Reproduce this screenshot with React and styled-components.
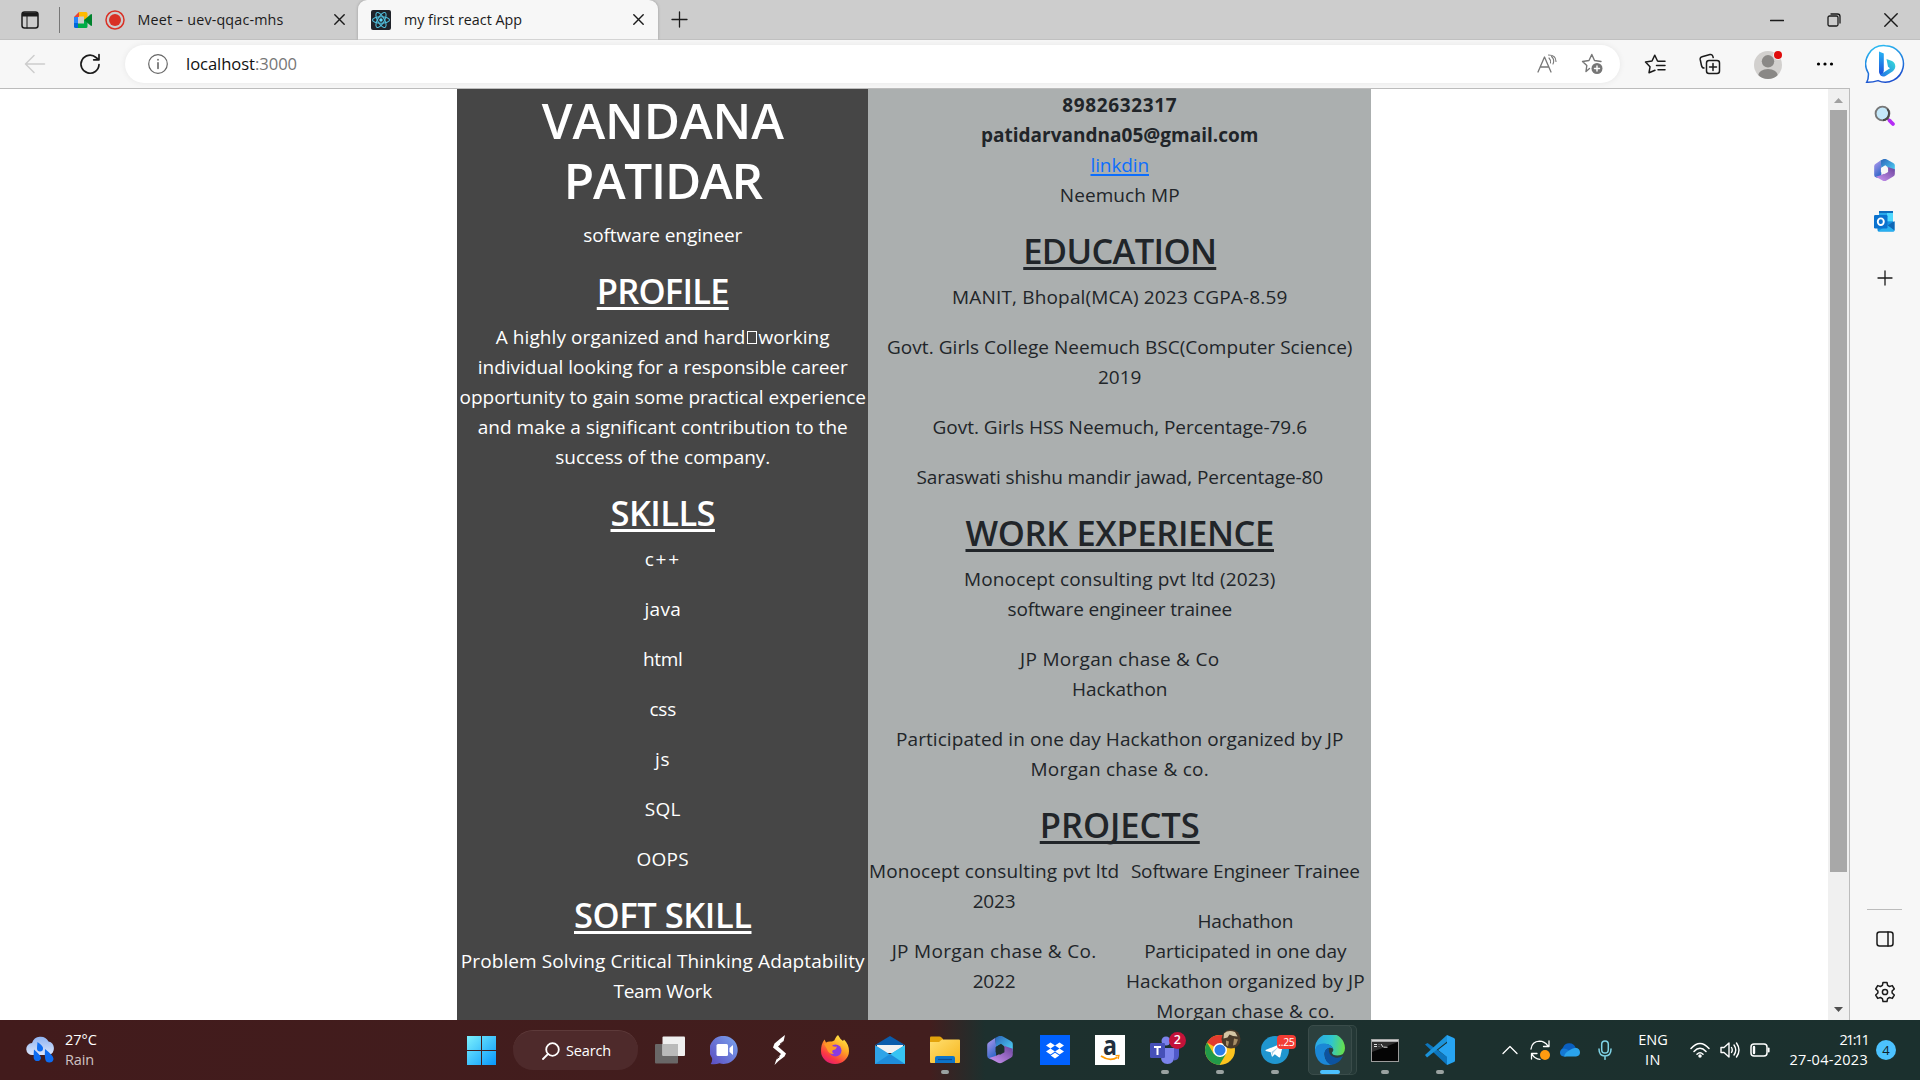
import React, { useLayoutEffect, useRef, useState } from "react";
import styled, { createGlobalStyle, css } from "styled-components";

const Global = createGlobalStyle`
  * { box-sizing: border-box; }
  body { margin: 0; overflow: hidden; background: #fff; }
  body, button { font-family: "Open Sans", "Noto Sans", sans-serif; }
`;

const Desktop = styled.div`
  width: 1920px;
  height: 1080px;
  display: flex;
  flex-direction: column;
  overflow: hidden;
`;

/* ---------- text fitted to a measured width ---------- */
const FitSpan = styled.span`
  white-space: nowrap;
`;

function Fit({ w, children }) {
  const ref = useRef(null);
  const [spacing, setSpacing] = useState(0);
  useLayoutEffect(() => {
    const el = ref.current;
    const natural = el.getBoundingClientRect().width;
    setSpacing((w - natural) / el.textContent.length);
  }, [w]);
  return (
    <FitSpan ref={ref} style={{ letterSpacing: `${spacing}px` }}>
      {children}
    </FitSpan>
  );
}

/* ---------- tab strip ---------- */
const TabStrip = styled.header`
  height: 40px;
  flex: none;
  display: flex;
  align-items: center;
  background: #cdcdcd;
  border-bottom: 1px solid #c0c0c0;
`;
const TabActions = styled.div`
  width: 60px;
  height: 26px;
  display: flex;
  align-items: center;
  padding-left: 21px;
  border-right: 1px solid #777;
`;
const Tab = styled.div`
  height: 40px;
  width: ${(p) => p.$width}px;
  padding: ${(p) => p.$pad};
  display: flex;
  align-items: center;
  font-size: 14.3px;
  line-height: 20px;
  color: #1b1b1b;
  ${(p) =>
    p.$active &&
    css`
      background: #f7f7f7;
      border-radius: 9px 9px 0 0;
      box-shadow: 0 0 3px rgba(0, 0, 0, 0.25);
      clip-path: inset(0 -4px 0 -4px);
    `}
`;
const TabTitle = styled.div`
  flex: 1;
  display: flex;
  align-items: center;
  gap: 12.5px;
  margin-left: 13px;
`;
const WindowControls = styled.div`
  margin-left: auto;
  display: flex;
  align-items: center;
  gap: 43px;
  padding-right: 22px;
`;
const NewTab = styled.div`
  display: flex;
  padding-left: 13px;
`;

/* ---------- toolbar ---------- */
const Toolbar = styled.div`
  height: 48px;
  flex: none;
  display: flex;
  align-items: center;
  background: #f7f7f7;
`;
const NavButtons = styled.div`
  width: 125px;
  flex: none;
  padding-left: 24px;
  display: flex;
  gap: 33px;
`;
const AddressBar = styled.div`
  width: 1495px;
  flex: none;
  height: 38px;
  border-radius: 19px;
  background: #fff;
  box-shadow: 0 0 6px rgba(0, 0, 0, 0.07);
  display: flex;
  align-items: center;
  padding: 0 17px 0 22px;
  gap: 24px;
`;
const Url = styled.div`
  flex: 1;
  margin-left: -7px;
  font-size: 16.6px;
  line-height: 24px;
  color: #111;
`;
const Port = styled.span`
  color: #767676;
`;
const ToolbarIcons = styled.div`
  flex: 1;
  display: flex;
  align-items: center;
  padding: 0 0 0 24px;
  gap: 32.5px;
`;
const Overflow = styled.svg`
  margin-left: -1px;
`;
const BingSlot = styled.div`
  display: flex;
  margin-left: -1.5px;
`;

/* ---------- page area ---------- */
const Body = styled.div`
  flex: 1;
  min-height: 0;
  display: flex;
`;
const Viewport = styled.main`
  width: 1850px;
  display: flex;
  border-top: 1px solid #bcbcbc;
  border-right: 1px solid #bcbcbc;
  background: #fff;
`;
const PageArea = styled.div`
  flex: 1;
  display: flex;
  justify-content: center;
  overflow: hidden;
`;
const Scrollbar = styled.div`
  width: 21px;
  background: #f0f0f0;
  display: flex;
  flex-direction: column;
  align-items: center;
  padding: 9px 0 8px;
`;
const Thumb = styled.div`
  width: 17px;
  height: 762px;
  margin: 7px 0 auto;
  background: #a8a8a8;
`;
const SideBar = styled.aside`
  flex: 1;
  background: #f7f7f7;
  display: flex;
  flex-direction: column;
  align-items: center;
  padding: 16px 1px 0 0;
`;
const SideSlot = styled.div`
  height: ${(p) => p.$h}px;
  display: flex;
  align-items: center;
`;
const SideRule = styled.div`
  width: 35px;
  height: 1px;
  background: #bcbcbc;
  margin: auto 0 4px;
`;

/* ---------- resume ---------- */
const Column = styled.section`
  width: ${(p) => p.$width}px;
  flex: none;
  padding: 1px 0 0 0.5px;
  background: ${(p) => p.$bg};
  color: ${(p) => p.$color};
  font-size: 19px;
  line-height: 30px;
  text-align: center;
`;
const Name = styled.h1`
  margin: 0 0 10px;
  font-size: 49.5px;
  line-height: 60px;
  font-weight: 600;
`;
const Heading = styled.h3`
  margin: 0 0 10px;
  font-size: 34.5px;
  line-height: 42px;
  font-weight: 600;
  text-decoration: underline;
  text-decoration-thickness: 3px;
  text-underline-offset: 3px;
  text-decoration-skip-ink: none;
`;
const Para = styled.div`
  margin-bottom: 20px;
`;
const Strong = styled.strong`
  font-weight: 700;
`;
const Link = styled.a`
  color: #0d6efd;
  text-decoration: underline;
  text-decoration-skip-ink: none;
  text-decoration-thickness: 2px;
  text-underline-offset: 2px;
`;
const Halves = styled.div`
  display: grid;
  grid-template-columns: 1fr 1fr;
`;
const MissingGlyph = styled.span`
  display: inline-block;
  width: 10px;
  height: 13px;
  margin: 0 2px 0 1px;
  border: 1px solid #fff;
`;

/* ---------- taskbar ---------- */
const TaskBar = styled.footer`
  height: 60px;
  flex: none;
  display: flex;
  align-items: center;
  background: linear-gradient(90deg, #421b1c 0, #421e1e 930px, #1d302e 985px, #1b302e 100%);
  color: #fff;
  font-size: 14.5px;
  line-height: 20px;
`;
const Weather = styled.div`
  width: 454px;
  display: flex;
  align-items: center;
  gap: 9px;
  padding: 0 0 0 26px;
`;
const Muted = styled.div`
  color: #cfc2c2;
`;
const StartSlot = styled.div`
  width: 59px;
  display: flex;
  padding-left: 13px;
`;
const SearchPill = styled.div`
  width: 125px;
  height: 40px;
  border-radius: 20px;
  background: #4e2a2b;
  border-top: 1px solid #5d3a3a;
  display: flex;
  align-items: center;
  gap: 6px;
  padding-left: 29px;
`;
const Apps = styled.div`
  display: flex;
  margin-left: 4.4px;
`;
const AppSlot = styled.div`
  width: 55px;
  height: 60px;
  display: flex;
  flex-direction: column;
  align-items: center;
  padding-top: 12px;
`;
const AppFace = styled.div`
  width: 36px;
  height: 36px;
  flex: none;
  position: relative;
  display: flex;
  align-items: center;
  justify-content: center;
`;
const ActiveSlot = styled(AppSlot)`
  width: 44px;
  height: 50px;
  margin: 5px 5.3px 5px 5.7px;
  padding-top: 6px;
  border-radius: 5px;
  background: #2c403e;
  border: 1px solid #3a4c4a;
  box-shadow: 5px 0 0 -1px #243836, 5px 0 0 0 #364946;
`;
const Indicator = styled.div`
  width: ${(p) => (p.$active ? 20 : 8)}px;
  height: 4px;
  margin-top: 2px;
  border-radius: 2px;
  background: ${(p) => (p.$active ? "#4cc2ff" : "#9aa2a1")};
`;
const CountBadge = styled.div`
  position: absolute;
  top: ${(p) => (p.$square ? 3 : 0)}px;
  right: -3px;
  width: ${(p) => (p.$square ? 19 : 17)}px;
  height: ${(p) => (p.$square ? 14 : 17)}px;
  border-radius: ${(p) => (p.$square ? 4 : 9)}px;
  background: ${(p) => (p.$square ? "#f23c34" : "#c4123a")};
  font-size: ${(p) => (p.$square ? 10.5 : 12.5)}px;
  font-weight: ${(p) => (p.$square ? 400 : 600)};
  letter-spacing: ${(p) => (p.$square ? -0.3 : 0)}px;
  line-height: ${(p) => (p.$square ? 14 : 16)}px;
  white-space: nowrap;
  text-align: center;
`;
const Tray = styled.div`
  margin-left: auto;
  padding-right: 24px;
  display: flex;
  align-items: center;
`;
const TrayIcon = styled.div`
  display: flex;
  margin-left: ${(p) => p.$gap}px;
`;
const TwoLines = styled.div`
  width: ${(p) => p.$width}px;
  margin-left: ${(p) => p.$gap}px;
  text-align: ${(p) => p.$align};
`;
const NoticeBadge = styled.div`
  width: 20px;
  height: 20px;
  margin-left: 8px;
  border-radius: 50%;
  background: #4cc2ff;
  color: #10242c;
  font-size: 13px;
  text-align: center;
`;

/* ---------- line icons ---------- */
const Icon = ({ w = 20, h = w, box = `0 0 ${w} ${h}`, c = "#1b1b1b", s = 1.3, children }) => (
  <svg width={w} height={h} viewBox={box} fill="none" stroke={c} strokeWidth={s} strokeLinecap="round" strokeLinejoin="round">
    {children}
  </svg>
);
const Close = ({ size = 11 }) => (
  <Icon w={size} s={1.4}>
    <path d={`M.8.8L${size - 0.8} ${size - 0.8}M${size - 0.8}.8L.8 ${size - 0.8}`} />
  </Icon>
);
const Plus = ({ size = 17 }) => (
  <Icon w={size}>
    <path d={`M${size / 2} 1V${size - 1}M1 ${size / 2}H${size - 1}`} />
  </Icon>
);

const MeetLogo = () => (
  <svg width="18" height="16" viewBox="0 0 18 16">
    <path d="M0 5L5 0v5z" fill="#ea4335" />
    <path d="M0 5h4v6H0z" fill="#2684fc" />
    <path d="M0 11h4v5H1.500Q0 16 0 14.500z" fill="#0066da" />
    <path d="M5 0h7q1.500 0 1.500 1.500V7l-3.500 2V4.500H5z" fill="#ffba00" />
    <path d="M4 11.500h6V8l3.500-1v7.500q0 1.500-1.500 1.500H4z" fill="#00ac47" />
    <path d="M10 8l6.500-5.500q1.500-1 1.500.500v10q0 1.500-1.500.500z" fill="#00832d" />
  </svg>
);
const RecordDot = () => (
  <svg width="20" height="20" viewBox="0 0 20 20">
    <circle cx="10" cy="10" r="9" fill="none" stroke="#d93025" strokeWidth="1.500" />
    <circle cx="10" cy="10" r="6" fill="#d93025" />
  </svg>
);
const ReactLogo = () => (
  <svg width="20" height="20" viewBox="0 0 20 20">
    <rect width="20" height="20" rx="2" fill="#20232a" />
    <g fill="none" stroke="#50bfdd" strokeWidth="1.100">
      <ellipse cx="10" cy="10" rx="8.500" ry="3.300" />
      <ellipse cx="10" cy="10" rx="8.500" ry="3.300" transform="rotate(60 10 10)" />
      <ellipse cx="10" cy="10" rx="8.500" ry="3.300" transform="rotate(120 10 10)" />
    </g>
    <circle cx="10" cy="10" r="1.700" fill="#61dafb" />
  </svg>
);
const BingLogo = () => (
  <svg width="40" height="40" viewBox="0 0 40 40">
    <defs>
      <linearGradient id="bingRing" x1="0" y1="0" x2="0.3" y2="1">
        <stop offset="0" stopColor="#2cc4f4" />
        <stop offset="1" stopColor="#1b50cf" />
      </linearGradient>
      <linearGradient id="bingB" x1="0" y1="0" x2="0" y2="1">
        <stop offset="0" stopColor="#27b4f5" />
        <stop offset="1" stopColor="#1b48d8" />
      </linearGradient>
      <linearGradient id="bingTail" x1="0" y1="1" x2="1" y2="0">
        <stop offset="0" stopColor="#2070e8" />
        <stop offset="1" stopColor="#38e0d8" />
      </linearGradient>
    </defs>
    <path d="M20.500 1.700a18.200 18.200 0 1 1-7.500 34.900c-3 1-7 1.900-11.300 1.700 1.500-2.500 1.900-5 1.700-9A18.200 18.200 0 0 1 20.500 1.700z" fill="#fff" stroke="url(#bingRing)" strokeWidth="1.500" />
    <path d="M14 7.500l4.800 2v17l-1.300 5.800q-3.500-1.500-3.500-5z" fill="url(#bingB)" />
    <path d="M21.500 15l5.500 2q3.300 1.800 3.300 5.500c0 2.500-1.800 4.500-4 5.700L20.500 32q-3.500 1.500-5.500-1.200l10-6.500-2-1.500z" fill="url(#bingTail)" />
  </svg>
);
const M365 = ({ size }) => (
  <svg width={size} height={size * 1.06} viewBox="0 0 26 28">
    <defs>
      <linearGradient id="mTop" x1="0" y1="0" x2="1" y2="1">
        <stop offset="0" stopColor="#2b62b8" />
        <stop offset="1" stopColor="#4fd6f8" />
      </linearGradient>
      <linearGradient id="mLeft" x1="0" y1="0" x2="0.4" y2="1">
        <stop offset="0" stopColor="#b69af0" />
        <stop offset="1" stopColor="#3268c8" />
      </linearGradient>
      <linearGradient id="mBottom" x1="0" y1="1" x2="1" y2="0">
        <stop offset="0" stopColor="#cf9af5" />
        <stop offset="1" stopColor="#6a419b" />
      </linearGradient>
    </defs>
    <path d="M8 2l-6 4Q0 7 0 9v11q0 2 2 3l2 1 5-3V9z" fill="url(#mLeft)" />
    <path d="M8 2l4-2q2-.500 4 .500L24 5q2 1 2 3v8l-8-5-4-3-5 3z" fill="url(#mTop)" />
    <path d="M26 13v6q0 2-2 3l-9 5.300q-2 1-4 0l-9-5 7-2.300 8-4V10z" fill="url(#mBottom)" />
    <path d="M13 9l4.500 2.500v5L13 19l-4.500-2.500v-5z" fill={size > 23 ? "#1d302e" : "#f7f7f7"} />
  </svg>
);
const Outlook = () => (
  <svg width="21" height="21" viewBox="0 0 21 21">
    <path d="M5 0h14v11H5z" fill="#28a8ea" />
    <path d="M5 0h14v2H5z" fill="#0f6cbd" />
    <path d="M13 2h6v8h-6z" fill="#50d9ff" />
    <path d="M3 11h17.500v8q0 1.500-1.500 1.500H5Q3.500 20.500 3.500 19z" fill="#1490df" />
    <path d="M20.500 10l-7 4.500 7 5z" fill="#1066b5" />
    <path d="M4 20.500h15q1.500 0 1.500-1L13 14z" fill="#28b0f0" />
    <rect y="4" width="13.500" height="13.500" rx="1.200" fill="#0a72cf" />
    <ellipse cx="6.800" cy="10.700" rx="3" ry="3.300" fill="none" stroke="#fff" strokeWidth="1.900" />
  </svg>
);
const SideSearch = () => (
  <svg width="22" height="22" viewBox="0 0 22 22">
    <path d="M13.500 13.500l2 2" stroke="#555" strokeWidth="2" />
    <path d="M15.500 15.500l3.500 3.500" stroke="#b52cf5" strokeWidth="3.800" strokeLinecap="round" />
    <circle cx="8.500" cy="8.500" r="6.900" fill="#c4e8fa" stroke="#777" strokeWidth="1.900" />
    <path d="M13.300 4A6.900 6.900 0 0 1 9 15.300" fill="none" stroke="#4b4b4b" strokeWidth="1.900" />
  </svg>
);
const Profile = () => (
  <svg width="31" height="30" viewBox="0 0 31 30">
    <clipPath id="pc"><circle cx="15" cy="16" r="14" /></clipPath>
    <circle cx="15" cy="16" r="14" fill="#d2d0ce" />
    <g clipPath="url(#pc)" fill="#8a8886">
      <circle cx="15" cy="12.300" r="6.200" />
      <ellipse cx="15" cy="27" rx="10" ry="7" />
    </g>
    <circle cx="25" cy="6" r="4.800" fill="#f7f7f7" />
    <circle cx="25" cy="6" r="4" fill="#e00b0b" />
  </svg>
);
const Gear = () => (
  <Icon w={22} s={1.5}>
    <path d="M9 1.500h4l.600 2.900 1.900 1.100 2.800-.900 2 3.400-2.200 2v2l2.200 2-2 3.400-2.800-.900-1.900 1.100-.600 2.900H9l-.600-2.900-1.900-1.100-2.800.900-2-3.400 2.200-2v-2l-2.200-2 2-3.400 2.800.900 1.900-1.100z" />
    <circle cx="11" cy="11" r="2.600" />
  </Icon>
);

/* ---------- taskbar drawings ---------- */
const WeatherIcon = () => (
  <svg width="30" height="28" viewBox="0 0 30 28">
    <defs>
      <linearGradient id="cl" x1="0" y1="0" x2="0" y2="1">
        <stop offset="0" stopColor="#8fb3f2" />
        <stop offset="1" stopColor="#dbe5fb" />
      </linearGradient>
    </defs>
    <path d="M6.500 19a6 6 0 0 1-.500-12A9 9 0 0 1 22.500 5.500 7 7 0 0 1 23 19z" fill="url(#cl)" />
    <g fill="#0d6cf2">
      <path d="M11.500 6q6 4 5.500 6.500a3 3 0 0 1-6 0q0-2 .500-6.500z" />
      <path d="M8 13.500q7 6 7 8.500a3.700 3.700 0 0 1-7.300 0q-.300-3 .300-8.500z" />
      <path d="M19 13q9 7 8.500 10a4.200 4.200 0 0 1-8.300 0q-.700-4-.200-10z" />
    </g>
  </svg>
);
const WindowsLogo = () => (
  <svg width="29" height="29" viewBox="0 0 29 29">
    <defs>
      <linearGradient id="win" x1="0" y1="0" x2="1" y2="1">
        <stop offset="0" stopColor="#7cf1fd" />
        <stop offset="1" stopColor="#0797fb" />
      </linearGradient>
    </defs>
    <path d="M0 0h14v14H0zM15 0h14v14H15zM0 15h14v14H0zM15 15h14v14H15z" fill="url(#win)" />
  </svg>
);
const TaskView = () => (
  <svg width="30" height="28" viewBox="0 0 30 28">
    <rect x="0" y="8" width="23" height="19.500" rx="1" fill="#696767" />
    <rect x="7.500" y="0.500" width="22.500" height="19.500" rx="1" fill="#efefef" />
    <path d="M7.500 8H23v12H8.500q-1 0-1-1z" fill="#b9b9b9" />
  </svg>
);
const Chat = () => (
  <svg width="30" height="29" viewBox="0 0 30 29">
    <defs>
      <linearGradient id="ch" x1="1" y1="0" x2="0" y2="0.8">
        <stop offset="0" stopColor="#7ba6ee" />
        <stop offset="1" stopColor="#5d52c4" />
      </linearGradient>
    </defs>
    <path d="M15 0a14 14 0 1 1-5.500 27.300Q5 29 .700 28q2-3 1.300-6A14 14 0 0 1 15 0z" fill="url(#ch)" />
    <rect x="6.500" y="8" width="11.500" height="12" rx="1.500" fill="#fff" />
    <path d="M19.500 12l3.500-3v10l-3.500-3z" fill="#fff" />
  </svg>
);
const Spark = () => (
  <svg width="13" height="30" viewBox="0 0 13 30">
    <path d="M12 0L10.500 6.500 5 11.500 13 18.500 11.500 21.500 5.500 26 1.500 30 3.500 24 8 19 0 12.500 1.500 8.500 7.500 3.500z" fill="#fff" />
    <path d="M10.500 6.500L7 9.200M3.500 24l3-2.300" stroke="#421e1e" strokeWidth="1" />
  </svg>
);
const Firefox = () => (
  <svg width="30" height="30" viewBox="0 0 30 30">
    <defs>
      <linearGradient id="ff" x1="0.8" y1="0" x2="0.2" y2="1">
        <stop offset="0" stopColor="#fff04a" />
        <stop offset="0.4" stopColor="#ffa324" />
        <stop offset="0.75" stopColor="#fb3b42" />
        <stop offset="1" stopColor="#e0167a" />
      </linearGradient>
    </defs>
    <path d="M18 0q2 4 5 6l1-1.500q5 5 5 11.500a14 13 0 0 1-28 0Q1 9 4.500 4.500L6 7.500Q8 6 12 6.500q3-1 3-2.500 1-2.500 3-4z" fill="url(#ff)" />
    <circle cx="15.500" cy="15.500" r="6" fill="#8a3be0" />
    <path d="M4 9q5-3 9 0l-1 2q3 1 5 .500-1 3.500-4 3.500-2 2 1 4-6 0-7-5z" fill="#ff9a26" />
  </svg>
);
const Mail = () => (
  <svg width="30" height="28" viewBox="0 0 30 28">
    <path d="M0 9L15 0l15 9z" fill="#0a5cab" />
    <path d="M2 9h26v8H2z" fill="#f1f1f1" />
    <path d="M0 9l15 9.500L30 9v19H0z" fill="#2fa4e8" />
    <path d="M30 9L14 19l16 9z" fill="#37c4f3" />
    <path d="M0 28l15-10 15 10z" fill="#1f8ddb" />
  </svg>
);
const Folder = () => (
  <svg width="30" height="28" viewBox="0 0 30 28">
    <defs>
      <linearGradient id="fo" x1="0" y1="0" x2="1" y2="1">
        <stop offset="0" stopColor="#ffdf70" />
        <stop offset="1" stopColor="#f6b51c" />
      </linearGradient>
    </defs>
    <path d="M0 1.500Q0 .500 1 .500h8.500q1 0 2 1L13 3v4H0z" fill="#e3a30c" />
    <path d="M0 6h9l3-2.500h17q1 0 1 1V26q0 1-1 1H1q-1 0-1-1z" fill="url(#fo)" />
    <path d="M5 27v-5q0-2 2-2h16q2 0 2 2v5z" fill="#0d74c9" />
    <path d="M8 23.500h14" stroke="#0a4d94" strokeWidth="1.200" />
  </svg>
);
const Dropbox = () => (
  <svg width="30" height="30" viewBox="0 0 30 30">
    <path d="M0 0h30v30H0z" fill="#0061fe" />
    <path d="M10.500 7.500l4.500 3-4.500 3-4.500-3zM19.500 7.500l4.500 3-4.500 3-4.500-3zM10.500 13.500l4.500 3-4.500 3-4.500-3zM19.500 13.500l4.500 3-4.500 3-4.500-3zM15 17.800l4.300 2.800L15 23.400l-4.300-2.800z" fill="#fff" />
  </svg>
);
const AmazonSvg = styled.svg`
  overflow: visible;
`;
const Amazon = () => (
  <AmazonSvg width="30" height="30" viewBox="0 0 30 30">
    <path d="M0 0h30v30H0z" fill="#fff" />
    <text x="15" y="19.500" textAnchor="middle" fontFamily="Open Sans, sans-serif" fontWeight="700" fontSize="27" fill="#222f3e" textLength="14" lengthAdjust="spacingAndGlyphs">a</text>
    <path d="M6 21q9 6 16.500 1.200" fill="none" stroke="#f90" strokeWidth="1.700" />
    <path d="M20.500 20.700l3.500-.200-.800 3.500" fill="none" stroke="#f90" strokeWidth="1.200" />
  </AmazonSvg>
);
const Teams = () => (
  <svg width="30" height="28" viewBox="0 0 30 28">
    <circle cx="16" cy="5" r="4.500" fill="#7b83eb" />
    <path d="M21 12h8v7q0 5-5 5.500z" fill="#5059c9" />
    <path d="M11 12h13v9q0 7-6.500 7T11 21z" fill="#7b83eb" />
    <rect y="7" width="15" height="15" rx="1.200" fill="#4650b8" />
    <path d="M4 11h7M7.500 11v8" stroke="#fff" strokeWidth="2" fill="none" />
  </svg>
);
const ChromeSvg = styled.svg`
  flex: none;
`;
const Chrome = () => (
  <ChromeSvg width="42" height="42" viewBox="-6 -0.500 42 42">
    <circle cx="15" cy="20.500" r="15" fill="#fcc31e" />
    <path d="M15 20.500L2 13A15 15 0 0 1 28.200 13.500H15z" fill="#e33b2e" />
    <path d="M2 13L8.500 24 15 27.300 21 24.500 14.500 35.500A15 15 0 0 1 2 13z" fill="#229a49" />
    <circle cx="15" cy="20.500" r="7" fill="#fff" />
    <circle cx="15" cy="20.500" r="5.500" fill="#2b7de9" />
    <circle cx="26" cy="9.500" r="9.500" fill="#4a3a2a" />
    <path d="M19 4q4-4 11-1.500l2.500 4.500-4.500-.500-3.500-1.500-2 3-4 1z" fill="#d4c5a4" />
    <path d="M21 11l3 1-1 5-2-1.500zM29 9l4 1-2 5-3 1z" fill="#a98e66" />
  </ChromeSvg>
);
const Telegram = () => (
  <svg width="28" height="28" viewBox="0 0 28 28">
    <circle cx="14" cy="14" r="14" fill="#2096cf" />
    <path d="M4.500 14L21 7.200q1.500-.300 1 1.300l-2.700 12.300q-.500 1-1.500.500l-4-3-2.200 2.200q-.800.500-.900-.500l-1-3.800-5-1.200z" fill="#fff" />
    <path d="M10.500 16l8-6-6.500 7-.400 3z" fill="#a9cfe6" />
  </svg>
);
const Edge = () => (
  <svg width="30" height="30" viewBox="0 0 30 30">
    <defs>
      <linearGradient id="eg" x1="0" y1="0.3" x2="1" y2="0.4">
        <stop offset="0" stopColor="#2aa5e8" />
        <stop offset="0.55" stopColor="#2fc5cf" />
        <stop offset="1" stopColor="#66e04b" />
      </linearGradient>
    </defs>
    <path d="M0 14A15 15 0 0 1 30 13q0 7.500-7.500 7.500-5.500 0-5.500-3 2-1.500 1-4-2-4.500-8-4.500Q2 9 0 16z" fill="url(#eg)" />
    <path d="M0 15Q1 8.500 8.500 8.500c5 0 8.500 2.300 9.500 5-4-2-8.500 1-8.500 6q0 7 8 10Q5 32 1 21q-1-3-1-6z" fill="#1b87d6" />
    <path d="M9.500 18q.500-4 4.500-5-1.500 7 6 9.500 4 1 8-1.500-3.500 8-12 9-6.500-3-6.500-12z" fill="#0d539f" />
  </svg>
);
const Terminal = () => (
  <svg width="28" height="23" viewBox="0 0 28 23">
    <rect x="0.500" y="0.500" width="27" height="22" fill="#050505" stroke="#9c9c9c" />
    <path d="M1 1.800h26" stroke="#d6d6d6" strokeWidth="2" />
    <path d="M3 5.500h3M3 7.500h3M8 5.500v.500M8 7.500v.500M10 5l2 3M12.500 8.200h4" stroke="#ddd" />
    <path d="M1 3h26L1 13z" fill="#fff" opacity=".17" />
  </svg>
);
const VSCode = () => (
  <svg width="30" height="30" viewBox="0 0 30 30">
    <path d="M0 9.500L2.500 8 25 24l-3 6z" fill="#0d75bd" />
    <path d="M0 20l2 2.500L24 5l-2-5z" fill="#1b93db" />
    <path d="M22 0l7 3q1 .500 1 1.500v21q0 1-1 1.500l-7 3V8l-9 7 9 7v8z" fill="#27a4f2" />
  </svg>
);

const apps = [
  { art: <TaskView /> },
  { art: <Chat /> },
  { art: <Spark /> },
  { art: <Firefox /> },
  { art: <Mail /> },
  { art: <Folder />, running: true },
  { art: <M365 size={26} /> },
  { art: <Dropbox /> },
  { art: <Amazon /> },
  { art: <Teams />, running: true, badge: "2" },
  { art: <Chrome />, running: true },
  { art: <Telegram />, running: true, badge: "..25", square: true },
  { art: <Edge />, active: true },
  { art: <Terminal />, running: true },
  { art: <VSCode />, running: true },
];

const skills = [
  ["c++", 36],
  ["java", 36.5],
  ["html", 39.5],
  ["css", 26.5],
  ["js", 15.5],
  ["SQL", 36],
  ["OOPS", 52.5],
];

/* Renders a paragraph from [text, width] lines. */
const Lines = ({ rows }) => (
  <Para>
    {rows.map(([text, w], i) => (
      <React.Fragment key={i}>
        {i > 0 && <br />}
        <Fit w={w}>{text}</Fit>
      </React.Fragment>
    ))}
  </Para>
);

export default function App() {
  return (
    <Desktop>
      <Global />
      <TabStrip>
        <TabActions>
          <Icon w={18} s={1.5}>
            <rect x="1" y="1" width="16" height="16" rx="2.500" />
            <path d="M1 3.500h16" strokeWidth="4" strokeLinecap="butt" />
            <path d="M6 5v12" strokeWidth="1" />
          </Icon>
        </TabActions>
        <Tab $width={298} $pad="0 13px 0 14px">
          <MeetLogo />
          <TabTitle>
            <RecordDot />
            <Fit w={146}>Meet – uev-qqac-mhs</Fit>
          </TabTitle>
          <Close />
        </Tab>
        <Tab $active $width={300} $pad="0 14px 0 13px">
          <ReactLogo />
          <TabTitle>
            <Fit w={118}>my first react App</Fit>
          </TabTitle>
          <Close />
        </Tab>
        <NewTab>
          <Plus />
        </NewTab>
        <WindowControls>
          <Icon w={14}>
            <path d="M.500 7.500h13" />
          </Icon>
          <Icon w={14}>
            <rect x="1" y="3" width="10" height="10" rx="1.500" />
            <path d="M4 1h6.500Q13 1 13 3.500V10" />
          </Icon>
          <Close size={14} />
        </WindowControls>
      </TabStrip>

      <Toolbar>
        <NavButtons>
          <Icon w={22} c="#cdcdcd" s={1.5}>
            <path d="M20.500 11H1.500M10 2.500L1.500 11l8.500 8.500" />
          </Icon>
          <Icon w={22} s={1.7}>
            <path d="M20 11.500A9 9 0 1 1 17 4.500l2.500 2M20 1.500v5.300h-5.300" />
          </Icon>
        </NavButtons>
        <AddressBar>
          <Icon w={22} c="#666" s={1.2}>
            <circle cx="11" cy="11" r="9.300" />
            <path d="M11 9.800v5.700M11 6.600v.300" strokeWidth="1.600" />
          </Icon>
          <Url>
            <Fit w={111}>
              localhost<Port>:3000</Port>
            </Fit>
          </Url>
          <Icon w={20} c="#777" s={1.3}>
            <path d="M1 18L7.500 3 14 18M3.500 13h8" />
            <path d="M12 4q2 2 1.500 5M14.500 2.500Q18 5.500 16 10M11.500 1Q19 1 19 7.500" strokeWidth="1.100" />
          </Icon>
          <Icon w={22} c="#767676" s={1.4}>
            <path d="M8.500 15.500L5 18.500 5.800 12.500 1.500 8.500 8 7.500 10.800 1.500 13.500 7.500 20 8.500" />
            <circle cx="16" cy="15.500" r="5.500" fill="#767676" stroke="none" />
            <path d="M16 13v5M13.500 15.500h5" stroke="#fff" />
          </Icon>
        </AddressBar>
        <ToolbarIcons>
          <Icon w={22} h={20} s={1.500}>
            <path d="M11 16.200L5 18.800 6 12.800 1.500 8 8 7 10.800 1.200 13.500 7M14 7.300h7M12.500 11.500H21M14 15.700h7" />
          </Icon>
          <Icon w={22} s={1.500}>
            <rect x="7.500" y="7.500" width="13" height="13" rx="2.500" />
            <path d="M14 10.500v7M10.500 14h7M5 15Q3 15 2.500 12.500L1.200 6.500Q.800 4.300 3 3.700L11 1.500Q13.500 1 14.200 4.500" />
          </Icon>
          <Profile />
          <Overflow width="18" height="6" viewBox="0 0 18 6">
            <circle cx="2.500" cy="3" r="1.600" />
            <circle cx="9" cy="3" r="1.600" />
            <circle cx="15.500" cy="3" r="1.600" />
          </Overflow>
          <BingSlot>
            <BingLogo />
          </BingSlot>
        </ToolbarIcons>
      </Toolbar>

      <Body>
        <Viewport>
          <PageArea>
            <Column $width={411} $bg="#464646" $color="#fff">
              <Name>
                <Fit w={242}>VANDANA</Fit>
                <br />
                <Fit w={198}>PATIDAR</Fit>
              </Name>
              <Lines rows={[["software engineer", 159]]} />
              <Heading><Fit w={132}>PROFILE</Fit></Heading>
              <Para>
                <Fit w={334}>A highly organized and hard<MissingGlyph />working</Fit>
                <br />
                <Fit w={370}>individual looking for a responsible career</Fit>
                <br />
                <Fit w={406.500}>opportunity to gain some practical experience</Fit>
                <br />
                <Fit w={370}>and make a significant contribution to the</Fit>
                <br />
                <Fit w={215}>success of the company.</Fit>
              </Para>
              <Heading><Fit w={104.500}>SKILLS</Fit></Heading>
              {skills.map((s) => (
                <Lines key={s[0]} rows={[s]} />
              ))}
              <Heading><Fit w={177.500}>SOFT SKILL</Fit></Heading>
              <Lines rows={[["Problem Solving Critical Thinking Adaptability", 404], ["Team Work", 98.500]]} />
            </Column>
            <Column $width={503} $bg="#abafaf" $color="#212529">
              <Para>
                <Strong><Fit w={115}>8982632317</Fit></Strong>
                <br />
                <Strong><Fit w={277.500}>patidarvandna05@gmail.com</Fit></Strong>
                <br />
                <Link><Fit w={58.500}>linkdin</Fit></Link>
                <br />
                <Fit w={120}>Neemuch MP</Fit>
              </Para>
              <Heading><Fit w={193}>EDUCATION</Fit></Heading>
              <Lines rows={[["MANIT, Bhopal(MCA) 2023 CGPA-8.59", 335.500]]} />
              <Lines rows={[["Govt. Girls College Neemuch BSC(Computer Science)", 465.500], ["2019", 43.500]]} />
              <Lines rows={[["Govt. Girls HSS Neemuch, Percentage-79.6", 374.500]]} />
              <Lines rows={[["Saraswati shishu mandir jawad, Percentage-80", 406.500]]} />
              <Heading><Fit w={308.500}>WORK EXPERIENCE</Fit></Heading>
              <Lines rows={[["Monocept consulting pvt ltd (2023)", 311.500], ["software engineer trainee", 224.500]]} />
              <Lines rows={[["JP Morgan chase & Co", 199.500], ["Hackathon", 95.500]]} />
              <Lines rows={[["Participated in one day Hackathon organized by JP", 447.500], ["Morgan chase & co.", 178.500]]} />
              <Heading><Fit w={160}>PROJECTS</Fit></Heading>
              <Halves>
                <div>
                  <Lines rows={[["Monocept consulting pvt ltd", 250.400], ["2023", 43]]} />
                  <Lines rows={[["JP Morgan chase & Co.", 205], ["2022", 43]]} />
                </div>
                <div>
                  <Lines rows={[["Software Engineer Trainee", 229]]} />
                  <Lines
                    rows={[
                      ["Hachathon", 96],
                      ["Participated in one day", 202.500],
                      ["Hackathon organized by JP", 239],
                      ["Morgan chase & co.", 178.500],
                    ]}
                  />
                </div>
              </Halves>
            </Column>
          </PageArea>
          <Scrollbar>
            <svg width="9" height="5" viewBox="0 0 9 5"><path d="M0 5L4.500 0 9 5z" fill="#a0a0a0" /></svg>
            <Thumb />
            <svg width="9" height="5" viewBox="0 0 9 5"><path d="M0 0h9L4.500 5z" fill="#505050" /></svg>
          </Scrollbar>
        </Viewport>
        <SideBar>
          <SideSlot $h={24}><SideSearch /></SideSlot>
          <SideSlot $h={84}><M365 size={21} /></SideSlot>
          <SideSlot $h={18}><Outlook /></SideSlot>
          <SideSlot $h={96}><Plus size={16} /></SideSlot>
          <SideRule />
          <SideSlot $h={50}>
            <Icon w={18} h={16} s={1.500}>
              <rect x="1" y="1" width="16" height="14" rx="2.500" />
              <path d="M12 1v14" />
            </Icon>
          </SideSlot>
          <SideSlot $h={56}><Gear /></SideSlot>
        </SideBar>
      </Body>

      <TaskBar>
        <Weather>
          <WeatherIcon />
          <div>
            <div><Fit w={32}>27°C</Fit></div>
            <Muted><Fit w={29}>Rain</Fit></Muted>
          </div>
        </Weather>
        <StartSlot><WindowsLogo /></StartSlot>
        <SearchPill>
          <Icon w={18} c="#fff" s={1.800}>
            <circle cx="10.500" cy="7.500" r="6.300" />
            <path d="M6 12l-5 5" />
          </Icon>
          <Fit w={45}>Search</Fit>
        </SearchPill>
        <Apps>
          {apps.map((app, i) => {
            const Slot = app.active ? ActiveSlot : AppSlot;
            return (
              <Slot key={i}>
                <AppFace>
                  {app.art}
                  {app.badge && <CountBadge $square={app.square}>{app.badge}</CountBadge>}
                </AppFace>
                {(app.running || app.active) && <Indicator $active={app.active} />}
              </Slot>
            );
          })}
        </Apps>
        <Tray>
          <Icon w={16} h={10} c="#fff" s={1.300}>
            <path d="M1 8.500L8 1.500l7 7" />
          </Icon>
          <TrayIcon $gap={12}>
            <Icon w={20} c="#fff">
              <path d="M1 9Q2 1.500 9.500 1.200q5 0 8.500 4.800M19 1v5.500h-5.500M1.500 19v-5.500H7M2 14q2.500 5 8 5.300" />
              <circle cx="15" cy="15" r="5" fill="#ff9b10" stroke="none" />
            </Icon>
          </TrayIcon>
          <TrayIcon $gap={10}>
            <svg width="20" height="14" viewBox="0 0 20 14">
              <path d="M4 11.500A4 4 0 0 1 3 4.500Q5 0 9.500.300 14 .500 15.500 4.500L8 12z" fill="#0a5fbf" />
              <path d="M3.500 13.500Q0 13 0 9.500T4 5.500q3 0 6 3l-4 5z" fill="#1478d4" />
              <path d="M4 13.500q1-4 5-6 3-2 6.500-2.800Q20 5.500 20 9.500q0 3.500-4 4z" fill="#2aa3ec" />
            </svg>
          </TrayIcon>
          <TrayIcon $gap={18}>
            <Icon w={14} h={20} c="#7fd3e6" s={1.500}>
              <rect x="3.700" y="1" width="6.600" height="12" rx="3.300" />
              <path d="M1 9q0 7 6 7t6-7M7 16v3.300" />
            </Icon>
          </TrayIcon>
          <TwoLines $width={32} $gap={25} $align="center">
            <div><Fit w={29.500}>ENG</Fit></div>
            <div><Fit w={16}>IN</Fit></div>
          </TwoLines>
          <TrayIcon $gap={21}>
            <Icon w={20} h={16} c="#fff" s={1.500}>
              <path d="M1 6.500Q10-3.500 19 6.500M4 9.500q6-6.500 12 0M7 12.300q3-3 6 0" />
              <circle cx="10" cy="14" r="1" fill="#fff" />
            </Icon>
          </TrayIcon>
          <TrayIcon $gap={10}>
            <Icon w={20} h={18} c="#fff" s={1.400}>
              <path d="M1 6.500h3L9 2v14l-5-4.500H1zM11.500 6.500q1.500 2.500 0 5M14 4q3.500 5 0 10M16.500 2q5 7 0 14" />
            </Icon>
          </TrayIcon>
          <TrayIcon $gap={10}>
            <Icon w={20} h={14} c="#fff" s={1.500}>
              <rect x="1" y="1" width="16" height="12" rx="3" />
              <path d="M4 4v6" strokeWidth="2.400" />
              <path d="M18.700 5.500v3" strokeWidth="1.800" />
            </Icon>
          </TrayIcon>
          <TwoLines $width={84} $gap={14} $align="right">
            <div><Fit w={28.500}>21:11</Fit></div>
            <div><Fit w={78.500}>27-04-2023</Fit></div>
          </TwoLines>
          <NoticeBadge>4</NoticeBadge>
        </Tray>
      </TaskBar>
    </Desktop>
  );
}
